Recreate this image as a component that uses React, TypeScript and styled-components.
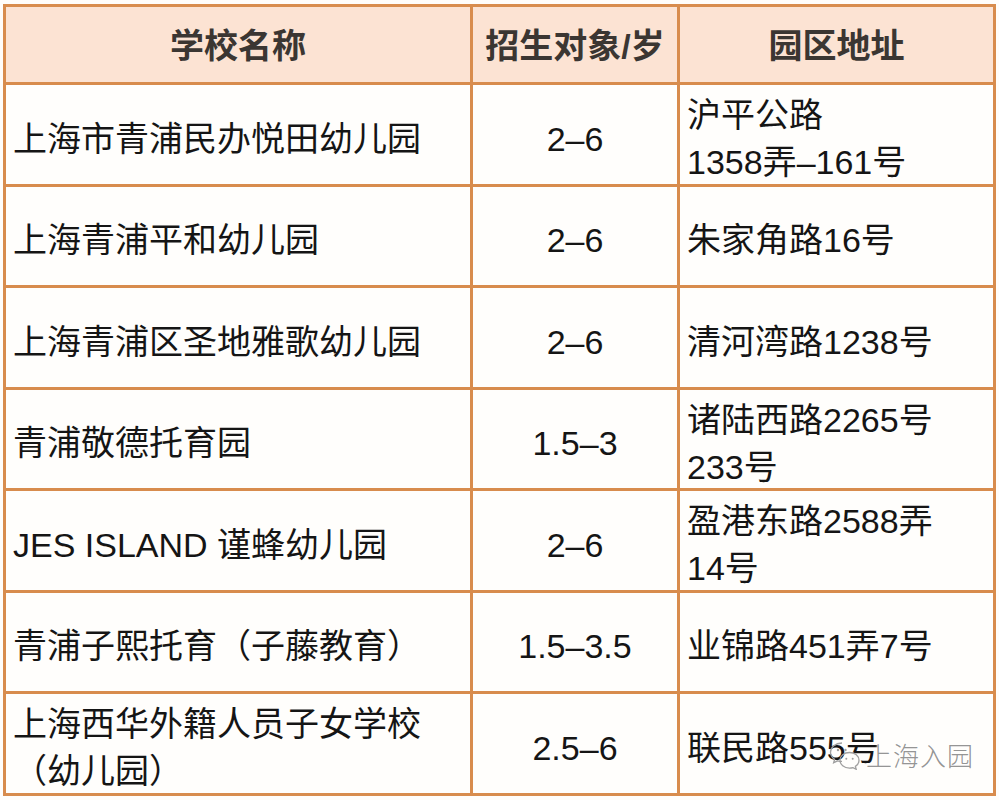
import React from 'react';
import styled, { createGlobalStyle } from 'styled-components';

type School = {
    name: React.ReactNode,
    age: string,
    address: React.ReactNode
}

const schools: School[] = [
    { name: '上海市青浦民办悦田幼儿园', age: '2–6', address: <>沪平公路<br />1358弄–161号</> },
    { name: '上海青浦平和幼儿园', age: '2–6', address: '朱家角路16号' },
    { name: '上海青浦区圣地雅歌幼儿园', age: '2–6', address: '清河湾路1238号' },
    { name: '青浦敬德托育园', age: '1.5–3', address: <>诸陆西路2265号<br />233号</> },
    { name: 'JES ISLAND 谨蜂幼儿园', age: '2–6', address: <>盈港东路2588弄<br />14号</> },
    { name: '青浦子熙托育（子藤教育）', age: '1.5–3.5', address: '业锦路451弄7号' },
    { name: <>上海西华外籍人员子女学校<br />（幼儿园）</>, age: '2.5–6', address: '联民路555号' },
];

const WeChatMark = () => (
    <svg width="34" height="30" viewBox="0 0 34 30" fill="none" stroke="#a0a0a0" strokeWidth="1.3">
        <path d="M14 3C7.4 3 2.5 7.2 2.5 12.3c0 2.9 1.6 5.4 4.1 7.1l-1 3.4 3.9-2c1.4.4 2.9.6 4.5.6" />
        <circle cx="10" cy="10" r="1.2" fill="#a0a0a0" stroke="none" />
        <circle cx="17.5" cy="10" r="1.2" fill="#a0a0a0" stroke="none" />
        <path d="M21.5 12.5c-5.5 0-9.5 3.6-9.5 7.8s4 7.8 9.5 7.8c1.2 0 2.4-.2 3.5-.5l3.2 1.7-.8-2.9c2.2-1.4 3.6-3.6 3.6-6.1 0-4.2-4-7.8-9.5-7.8z" />
        <circle cx="18.3" cy="18.8" r="1" fill="#a0a0a0" stroke="none" />
        <circle cx="24.7" cy="18.8" r="1" fill="#a0a0a0" stroke="none" />
    </svg>
);

const App = () => {
    return (
        <Page>
            <GlobalStyle />
            <Table>
                <Cell $header $align="center">学校名称</Cell>
                <Cell $header $align="center">招生对象/岁</Cell>
                <Cell $header $align="center">园区地址</Cell>
                {schools.map((s, i) => (
                    <React.Fragment key={i}>
                        <Cell $align="left">{s.name}</Cell>
                        <Cell $align="center">{s.age}</Cell>
                        <Cell $align="left">{s.address}</Cell>
                    </React.Fragment>
                ))}
            </Table>
            <Watermark>
                <WeChatMark />
                <WatermarkText>上海入园</WatermarkText>
            </Watermark>
        </Page>
    )
}

export default App;

const GlobalStyle = createGlobalStyle`
    html, body {
        margin: 0;
        padding: 0;
        background: #fffdfa;
    }
`;

const Page = styled.div`
    position: relative;
    width: 999px;
    height: 800px;
    padding: 4px 0 0 3px;
    box-sizing: border-box;
    font-family: "Liberation Sans", "Noto Sans CJK SC", sans-serif;
`;

const Table = styled.div`
    display: grid;
    grid-template-columns: 464px 204px 313px;
    grid-template-rows: 75px repeat(7, 98.5px);
    gap: 3px;
    padding: 3px;
    width: max-content;
    background: #d88c4d;
`;

const Cell = styled.div<{ $header?: boolean, $align: 'left' | 'center' }>`
    display: flex;
    flex-direction: column;
    justify-content: center;
    align-items: ${p => p.$align === 'center' ? 'center' : 'flex-start'};
    text-align: ${p => p.$align};
    padding: ${p => p.$header ? '4px 7px 0' : '10px 7px 0'};
    background: ${p => p.$header ? '#fce3d3' : '#fffefc'};
    color: ${p => p.$header ? '#3b3632' : '#151515'};
    font-size: 34px;
    font-weight: ${p => p.$header ? 700 : 400};
    line-height: 47px;
    white-space: nowrap;
`;

const Watermark = styled.div`
    position: absolute;
    left: 828px;
    top: 736px;
    display: flex;
    align-items: center;
    gap: 4px;
`;

const WatermarkText = styled.span`
    font-family: "Noto Sans CJK SC", sans-serif;
    font-size: 26px;
    font-weight: 300;
    color: rgba(120, 120, 120, 0.8);
    letter-spacing: 1px;
    text-shadow: 0 0 2px #fff, 0 0 2px #fff;
`;
